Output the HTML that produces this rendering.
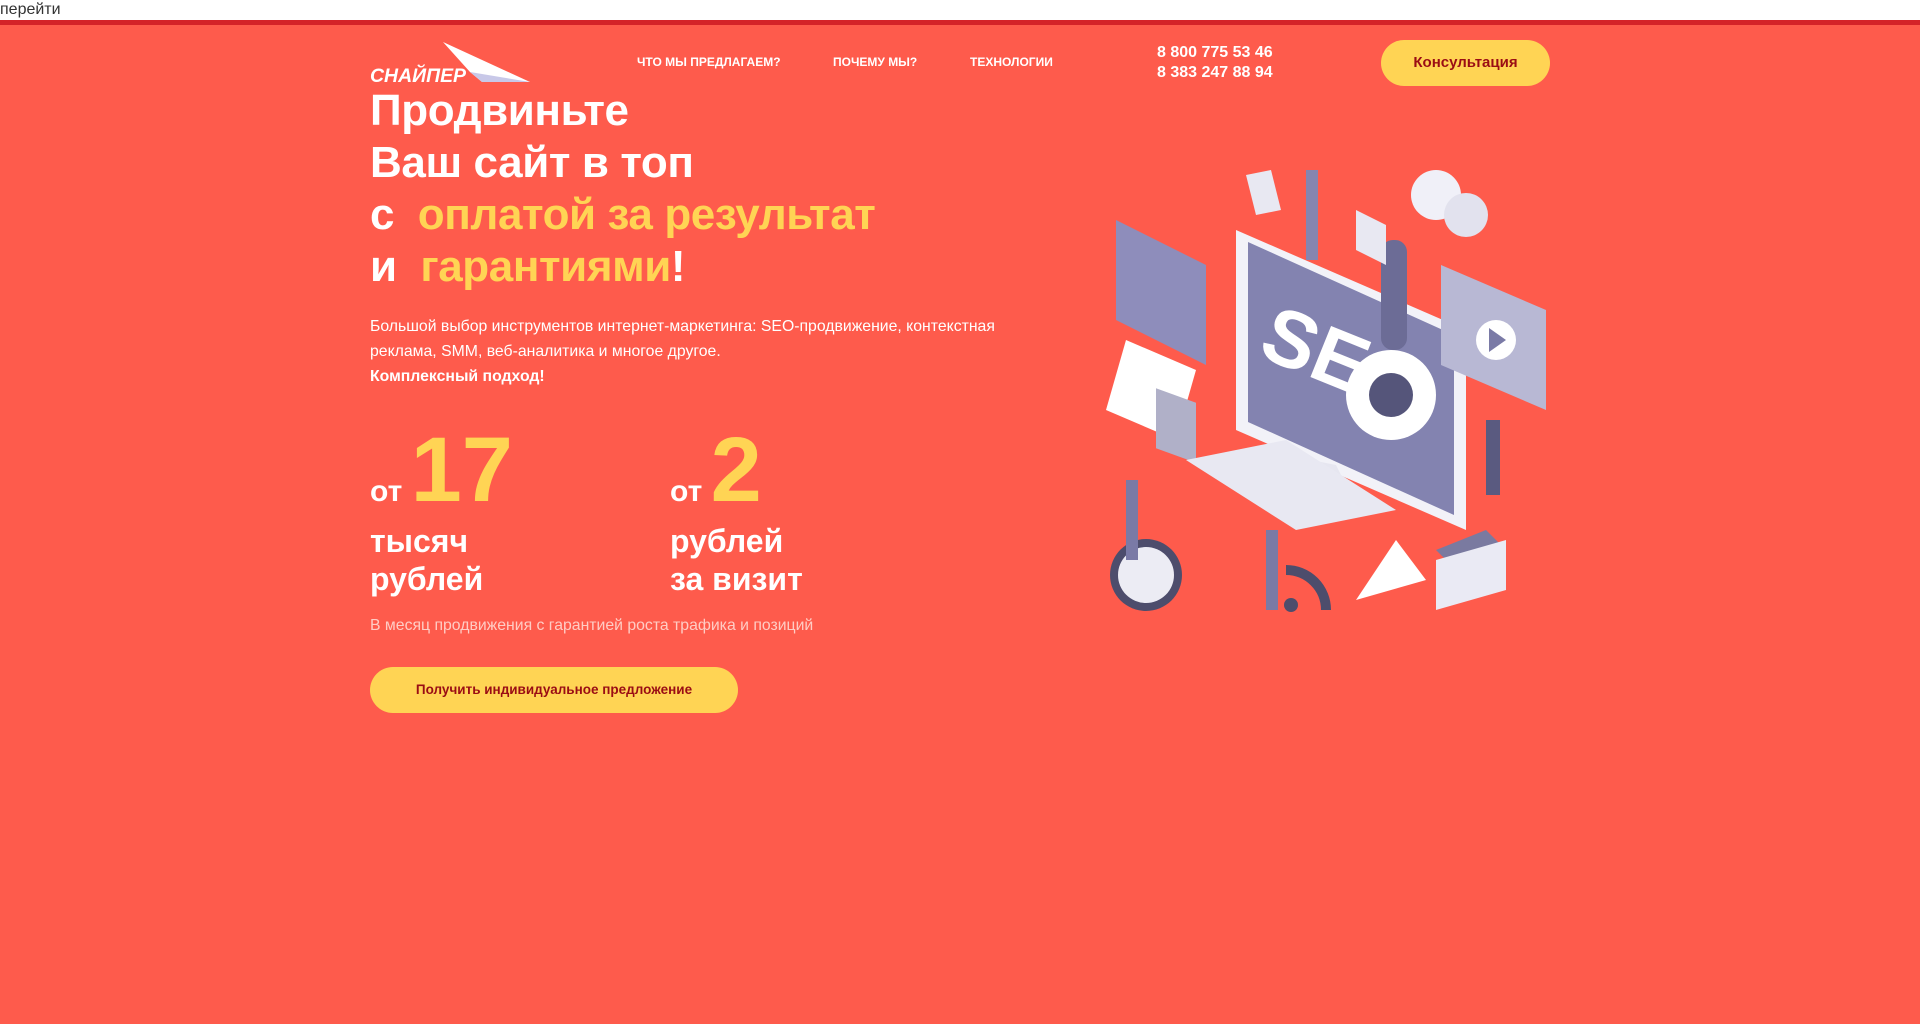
<!DOCTYPE html>
<html><head><meta charset="utf-8"><style>
*{margin:0;padding:0;box-sizing:border-box}
body{width:1920px;height:1024px;overflow:hidden;font-family:"Liberation Sans","Noto Sans CJK SC",sans-serif;background:#fe5b4c;position:relative}
.top{position:absolute;left:0;top:0;width:1920px;height:20px;background:#fff;font-size:16px;color:#333;line-height:20px}
.line{position:absolute;left:0;top:20px;width:1920px;height:5px;background:#d42328}
.a{position:absolute;white-space:nowrap}
.nav{font-size:12px;font-weight:bold;color:#fff;top:55px}
.ph{left:1157px;font-size:16px;font-weight:bold;color:#fff;line-height:20px;top:43px}
.btn{background:#ffd454;color:#9a0d14;font-weight:bold;border-radius:24px;text-align:center}
h1{position:absolute;left:370px;top:85px;font-size:44px;letter-spacing:-0.4px;line-height:52px;color:#fff;font-weight:bold}
h1 span{color:#ffd454}
.p{left:370px;top:314px;font-size:15.8px;line-height:25px;color:#fff;white-space:normal;width:640px}
.ot{font-size:30px;font-weight:bold;color:#fff}
.big{font-size:92px;font-weight:bold;color:#ffd454}
.lab{font-size:32px;font-weight:bold;color:#fff;line-height:38px}
</style></head><body>
<div class="top">перейти</div><div class="line"></div>
<div class="a" style="left:370px;top:42px;width:165px;height:44px">
<svg width="165" height="44" viewBox="0 0 165 44"><polygon points="73,0 160,40 112,40 100,30" fill="#fff"/><polygon points="100,30 160,40 112,40" fill="#c8c8e8"/><text x="0" y="40" font-family="Liberation Sans" font-weight="bold" font-style="italic" font-size="19" fill="#fff" textLength="96" lengthAdjust="spacingAndGlyphs">СНАЙПЕР</text></svg></div>
<div class="a nav" style="left:637px">ЧТО МЫ ПРЕДЛАГАЕМ?</div>
<div class="a nav" style="left:833px">ПОЧЕМУ МЫ?</div>
<div class="a nav" style="left:970px">ТЕХНОЛОГИИ</div>
<div class="a ph">8 800 775 53 46<br>8 383 247 88 94</div>
<div class="a btn" style="left:1381px;top:40px;width:169px;height:46px;line-height:46px;font-size:15px">Консультация</div>
<h1>Продвиньте<br>Ваш сайт в топ<br>с&nbsp; <span>оплатой за результат</span><br>и&nbsp; <span>гарантиями</span>!</h1>
<div class="a p">Большой выбор инструментов интернет-маркетинга: SEO-продвижение, контекстная реклама, SMM, веб-аналитика и многое другое.<br><b>Комплексный подход!</b></div>
<div class="a" style="left:370px;top:418px"><span class="ot">от </span><span class="big">17</span></div>
<div class="a" style="left:670px;top:418px"><span class="ot">от </span><span class="big">2</span></div>
<div class="a lab" style="left:370px;top:522px">тысяч<br>рублей</div>
<div class="a lab" style="left:670px;top:522px">рублей<br>за визит</div>
<div class="a" style="left:370px;top:617px;font-size:15.8px;color:#ffccc4">В месяц продвижения с гарантией роста трафика и позиций</div>
<div class="a btn" style="left:370px;top:667px;width:368px;height:46px;line-height:46px;font-size:13.5px">Получить индивидуальное предложение</div>
<svg class="a" style="left:1106px;top:170px" width="450" height="460" viewBox="0 0 450 460">
<g fill="#8e8dbb"><polygon points="10,50 100,95 100,195 10,150"/></g>
<polygon points="130,60 360,160 360,360 130,260" fill="#f2f2f8"/>
<polygon points="142,72 348,165 348,345 142,252" fill="#8383b0"/>
<text x="150" y="185" font-size="80" font-weight="bold" fill="#fff" font-family="Liberation Sans" transform="rotate(22 150 185)">SEO</text>
<circle cx="285" cy="225" r="45" fill="#fff"/><circle cx="285" cy="225" r="22" fill="#55557a"/>
<rect x="275" y="70" width="26" height="110" rx="12" fill="#6c6c96"/>
<polygon points="335,95 440,140 440,240 335,195" fill="#b8b8d4"/><circle cx="390" cy="170" r="20" fill="#fff"/><polygon points="383,158 383,182 400,170" fill="#7a7aa6"/>
<polygon points="20,170 90,200 70,270 0,240" fill="#fff"/><rect x="50" y="200" width="40" height="60" fill="#b0b0c8" transform="skewY(20)"/>
<polygon points="180,285 230,295 250,335 190,325" fill="#e6e6f0"/>
<polygon points="80,290 180,270 290,340 190,360" fill="#e8e8f2"/>
<circle cx="40" cy="405" r="36" fill="#4d4d6c"/><circle cx="40" cy="405" r="28" fill="#ececf4"/>
<path d="M180 400 a40 40 0 0 1 40 40" stroke="#4d4d6c" stroke-width="10" fill="none"/><circle cx="185" cy="435" r="7" fill="#4d4d6c"/>
<polygon points="140,5 165,0 175,40 150,45" fill="#e8e8f2"/><rect x="200" y="0" width="12" height="90" fill="#8585b0"/>
<polygon points="250,40 280,55 280,95 250,80" fill="#e8e8f2"/>
<circle cx="330" cy="25" r="25" fill="#f0f0f8"/><circle cx="360" cy="45" r="22" fill="#e2e2ee"/>
<polygon points="330,380 380,360 400,380 350,400" fill="#7a7aa0"/>
<polygon points="290,370 320,410 250,430" fill="#fff"/>
<polygon points="330,390 400,370 400,420 330,440" fill="#eaeaf4"/>
<rect x="20" y="310" width="12" height="80" fill="#7a7aa6"/><rect x="160" y="360" width="12" height="80" fill="#7a7aa6"/><rect x="380" y="250" width="14" height="75" fill="#5a5a80"/>
</svg>
</body></html>
